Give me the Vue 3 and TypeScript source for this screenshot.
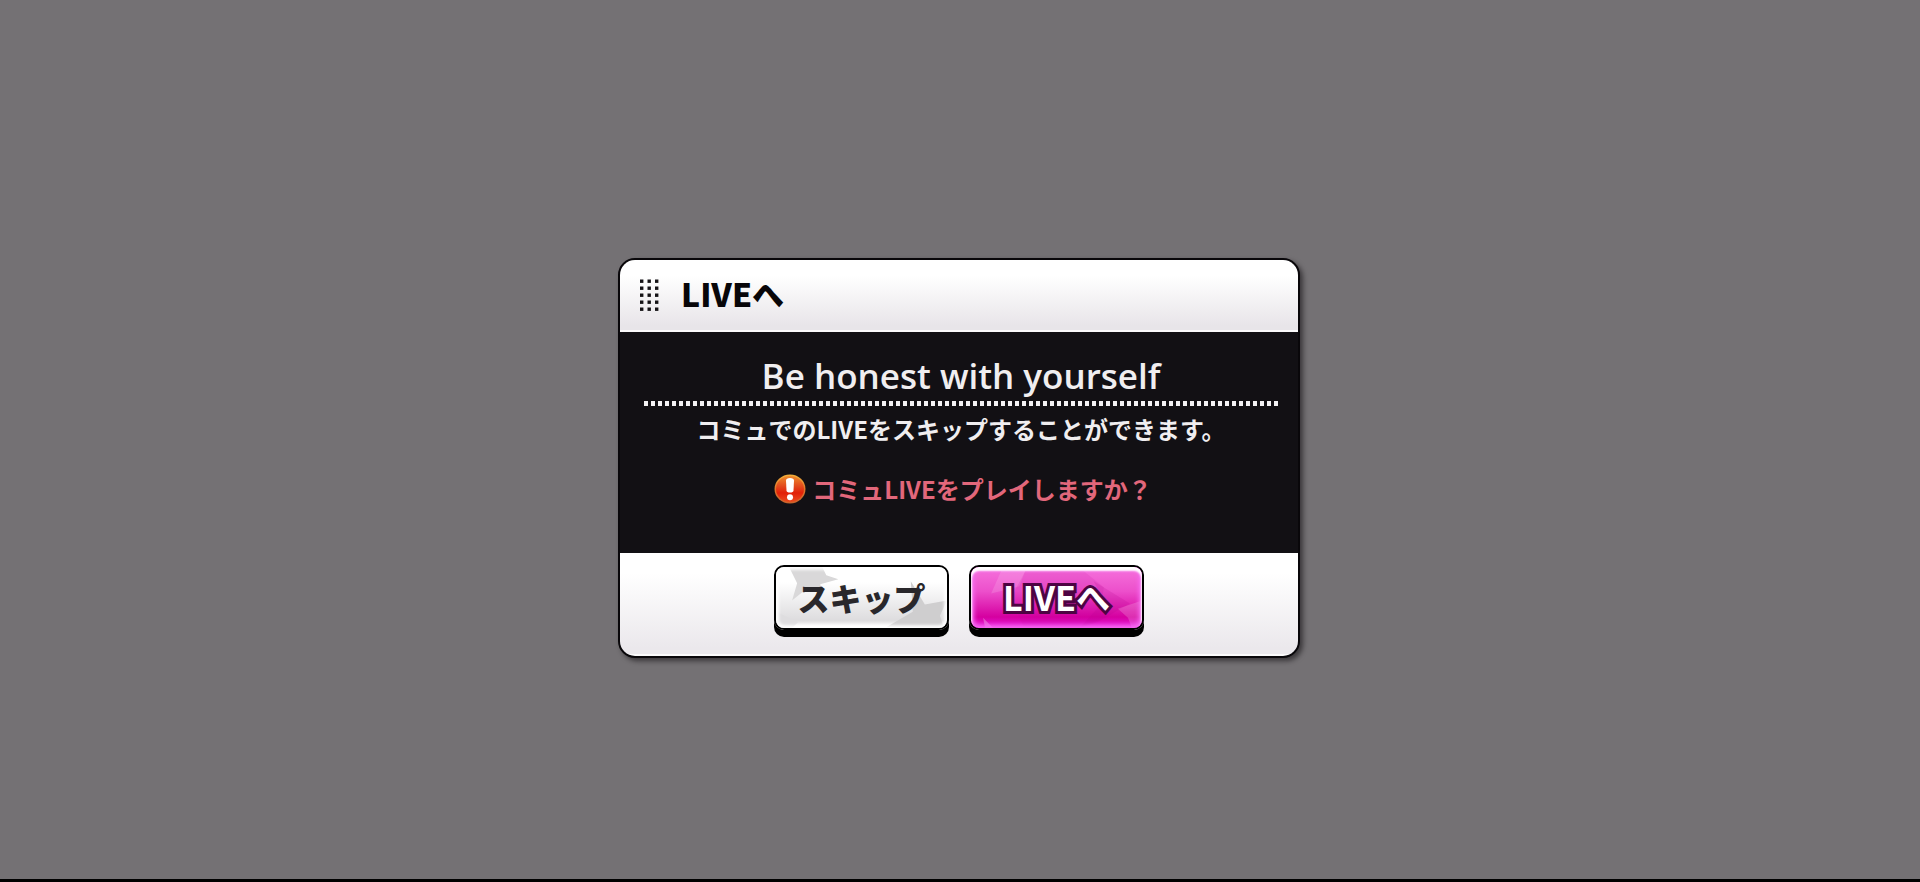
<script setup lang="ts">
interface Dialog {
  title: string
  song: string
  description: string
  question: string
  skip: string
  play: string
}

const dialog: Dialog = {
  title: 'LIVEへ',
  song: 'Be honest with yourself',
  description: 'コミュでのLIVEをスキップすることができます。',
  question: 'コミュLIVEをプレイしますか？',
  skip: 'スキップ',
  play: 'LIVEへ',
}

const grip: number[] = Array.from({ length: 15 }, (_, i) => i)
</script>

<template>
  <main class="screen">
    <section class="dialog" role="dialog" aria-labelledby="dialog-title">
      <header class="head">
        <svg class="grip" viewBox="0 0 19 32" aria-hidden="true">
          <rect v-for="i in grip" :key="i" :x="(i % 3) * 7.5" :y="Math.floor(i / 3) * 7 + 0.5" width="3.4" height="3.4" />
        </svg>
        <h1 id="dialog-title" class="title">{{ dialog.title }}</h1>
      </header>

      <div class="body">
        <h2 class="song">{{ dialog.song }}</h2>
        <div class="dots"></div>
        <p class="description">{{ dialog.description }}</p>
        <p class="question">
          <svg class="alert" viewBox="0 0 32 30" aria-hidden="true">
            <defs>
              <linearGradient id="ring" x1="0" y1="0" x2="0" y2="1">
                <stop offset="0" stop-color="#f3b13c" />
                <stop offset="0.5" stop-color="#e0742a" />
                <stop offset="1" stop-color="#c8622c" />
              </linearGradient>
              <linearGradient id="ball" x1="0" y1="0" x2="0" y2="1">
                <stop offset="0" stop-color="#ee8a2c" />
                <stop offset="0.4" stop-color="#e2491c" />
                <stop offset="0.65" stop-color="#e22008" />
                <stop offset="1" stop-color="#ea4a1c" />
              </linearGradient>
            </defs>
            <ellipse cx="16" cy="15" rx="15.5" ry="14.5" fill="url(#ring)" />
            <ellipse cx="16" cy="15" rx="14" ry="13" fill="url(#ball)" />
            <path d="M12 6.5Q12 4 16 4T20 6.5L19.5 16.5Q19.3 18.5 16 18.5T12.5 16.5Z" fill="#fff" />
            <circle cx="16" cy="23.2" r="3" fill="#fff" />
          </svg>
          <span>{{ dialog.question }}</span>
        </p>
      </div>

      <footer class="foot">
        <button type="button" class="btn skip">
          <svg class="art" viewBox="0 0 170 60" preserveAspectRatio="none" aria-hidden="true">
            <path d="M13 0L46 0L50 8L62 12L44 17L46 26L31 21L16 33L21 16Z" fill="#d9d8d9" />
            <path d="M0 44L22 54L16 60H0Z" fill="#dedddf" />
            <path d="M110 59L136 44L134 14L148 37L170 33L163 48L167 60Z" fill="#cfcecf" />
          </svg>
          <span class="label">{{ dialog.skip }}</span>
        </button>
        <button type="button" class="btn play">
          <svg class="art" viewBox="0 0 170 60" preserveAspectRatio="none" aria-hidden="true">
            <path d="M30 4L54 4L48 19L20 26Z" fill="#fff" opacity="0.14" />
            <path d="M54 4L112 4L132 20L128 52L104 60L52 58L40 30Z" fill="#c00090" opacity="0.12" />
            <path d="M122 14L158 36L126 54L108 60L132 34Z" fill="#b00088" opacity="0.16" />
            <path d="M170 33L146 41L156 50L160 60H170Z" fill="#fff" opacity="0.18" />
            <path d="M12 50L22 60H14Z" fill="#fff" opacity="0.3" />
          </svg>
          <span class="label">{{ dialog.play }}</span>
        </button>
      </footer>
    </section>
  </main>
</template>

<style>
body {
  margin: 0;
  background: #747174;
}
</style>

<style scoped>
.screen {
  box-sizing: border-box;
  min-height: 100vh;
  padding: 36px 2px 0 0;
  display: flex;
  align-items: center;
  justify-content: center;
  background: #747174;
  border-bottom: 3px solid #000;
  font-family: "Noto Sans CJK JP", sans-serif;
}

.dialog {
  box-sizing: border-box;
  width: min(682px, 92%);
  border: 2px solid #09070a;
  border-radius: 17px;
  background: #121014;
  overflow: hidden;
  box-shadow: 3px 3px 5px rgba(20, 16, 20, 0.6);
}

.head {
  display: flex;
  align-items: center;
  gap: 22px;
  box-sizing: border-box;
  height: 72px;
  padding: 0 20px;
  background: linear-gradient(#fff 22%, #e8e5e9 94%);
  border-bottom: 2px solid #fbfafb;
}

.grip {
  width: 19px;
  height: 32px;
  fill: #151316;
}

.title {
  margin: 0;
  padding-bottom: 4px;
  font-size: 32px;
  font-weight: 900;
  line-height: 44px;
  color: #080609;
}

.body {
  padding: 21px 20px 46px 24px;
  text-align: center;
  color: #f0eef0;
}

.song {
  margin: 0 0 2px;
  font-family: "Open Sans", "Noto Sans CJK JP", sans-serif;
  font-size: 35px;
  font-weight: 600;
  line-height: 46px;
}

.dots {
  height: 5px;
  background: repeating-linear-gradient(90deg, #f4f2f4 0 4px, transparent 4px 7px);
}

.description {
  margin: 6px 0 0;
  font-size: 24px;
  font-weight: 700;
  line-height: 34px;
}

.question {
  display: flex;
  align-items: center;
  justify-content: center;
  gap: 6px;
  margin: 26px 0 0;
  padding: 0 0 1px 4px;
  font-size: 24px;
  font-weight: 700;
  line-height: 34px;
  color: #e2677b;
}

.alert {
  width: 32px;
  height: 30px;
}

.foot {
  display: flex;
  justify-content: center;
  gap: 20px;
  padding: 12px 20px 24px;
  background: linear-gradient(#fff 20%, #ebe8ec 94%);
  border-bottom: 2px solid #fbfafb;
}

.btn {
  position: relative;
  width: 175px;
  height: 65px;
  padding: 0;
  box-sizing: border-box;
  border: 2px solid #000;
  border-radius: 10px;
  box-shadow: 0 7px 0 #000;
  overflow: hidden;
  font-family: inherit;
  font-weight: 900;
  cursor: pointer;
}

.skip {
  background: linear-gradient(#fff 25%, #dddcde 88%, #fff 98%);
  color: #29272b;
}

.play {
  background: linear-gradient(#f673dc, #ec4fcb 40%, #d500a0 82%, #e81ce0);
  color: #fff;
}

.art {
  position: absolute;
  inset: 0;
  width: 100%;
  height: 100%;
}

.skip::after,
.play::after {
  content: "";
  position: absolute;
  inset: 0;
  border-radius: 8px;
}

.skip::after {
  box-shadow: inset 0 0 3px 3px rgba(255, 255, 255, 0.9);
}

.play::after {
  box-shadow: inset 0 3px 2px 1px #fff, inset 0 0 4px 3px #f76cf2;
}

.label {
  position: relative;
  z-index: 1;
  font-size: 32px;
  line-height: 44px;
}

.play .label {
  font-size: 34px;
  -webkit-text-stroke: 6px #4d0442;
  paint-order: stroke fill;
  font-weight: 700;
}
</style>
